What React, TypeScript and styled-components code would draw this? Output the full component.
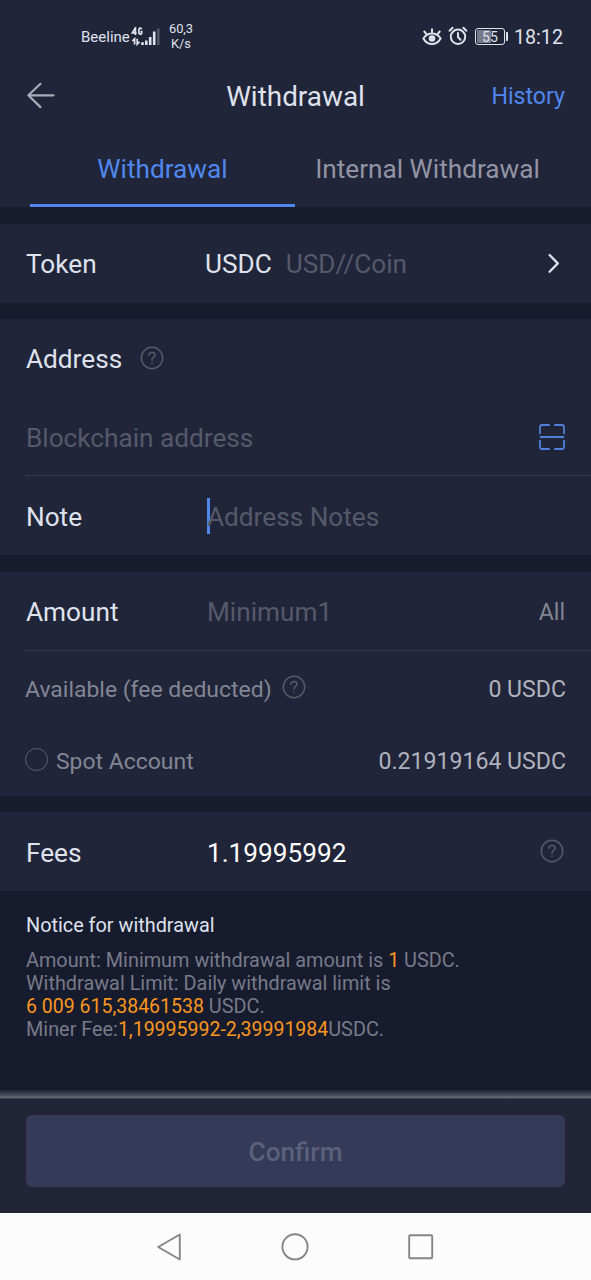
import React from "react";
import styled, { createGlobalStyle } from "styled-components";

const GlobalStyle = createGlobalStyle`
  *, *::before, *::after { box-sizing: border-box; }
  body { margin: 0; background: #171b2e; }
`;

const Screen = styled.div`
  display: flex;
  flex-direction: column;
  width: 591px;
  height: 1280px;
  overflow: hidden;
  background: #171b2e;
  color: #dfe2ec;
  font-family: Roboto, "Liberation Sans", sans-serif;
  font-size: 26.2px;
  line-height: 1.2;
  white-space: nowrap;

  svg { display: block; flex: none; }
`;

const TopPanel = styled.header`
  height: 207px;
  flex: none;
  background: #212539;
`;

const StatusBar = styled.div`
  display: flex;
  align-items: center;
  justify-content: space-between;
  height: 61px;
  padding: 13px 28px 0 81px;
`;

const StatusGroup = styled.div`
  display: flex;
  align-items: center;
`;

const Carrier = styled.span`
  width: 50px;
  font-size: 15px;
`;

const Speed = styled.span`
  width: 26px;
  margin: 0 0 2px 7px;
  font-size: 12.8px;
  line-height: 15px;
  text-align: center;
`;

const Battery = styled.div`
  display: flex;
  align-items: center;
  margin: 0 0 1px 7px;

  &::after {
    content: "";
    width: 2px;
    height: 9px;
    margin-left: 1px;
    border-radius: 0 1px 1px 0;
    background: #dfe2ec;
  }
`;

const BatteryLevel = styled.span<{ $level: number }>`
  width: 30px;
  height: 17px;
  border: 1px solid #dfe2ec;
  border-radius: 3px;
  background: linear-gradient(90deg, #777a88 ${(p) => p.$level}%, transparent ${(p) => p.$level}%) content-box;
  padding: 1px;
  font-size: 14px;
  line-height: 14px;
  text-align: center;
`;

const Clock = styled.time`
  margin-left: 6px;
  padding-top: 1px;
  font-size: 19.7px;
`;

const TitleBar = styled.div`
  display: grid;
  grid-template-columns: 1fr auto 1fr;
  align-items: center;
  height: 70px;
  padding: 0 26px 0 26px;
`;

const Title = styled.h1`
  margin: 0;
  padding-top: 2px;
  font-size: 27.9px;
  font-weight: 400;
`;

const HistoryLink = styled.a`
  justify-self: end;
  padding-top: 2px;
  color: #5087ee;
  font-size: 23.1px;
`;

const Tabs = styled.nav`
  display: grid;
  grid-template-columns: 265px 265px;
  height: 76px;
  padding: 0 30px;
`;

const Tab = styled.a<{ $active?: boolean }>`
  display: flex;
  align-items: center;
  justify-content: center;
  padding-top: 5px;
  color: ${(p) => (p.$active ? "#5087ee" : "#9294a3")};
  border-bottom: 3px solid ${(p) => (p.$active ? "#5087ee" : "transparent")};
`;

const Panel = styled.section<{ $gap?: number }>`
  flex: none;
  margin-top: ${(p) => p.$gap ?? 17}px;
  background: #212539;
`;

const Row = styled.div<{ $height?: number; $inset?: number; $right?: number; $drop?: number }>`
  display: flex;
  align-items: center;
  height: ${(p) => p.$height ?? 79}px;
  padding: 0 ${(p) => p.$right ?? 26}px 0 ${(p) => p.$inset ?? 26}px;

  & > span { padding-top: ${(p) => p.$drop ?? 2}px; }
`;

const Divider = styled.hr`
  height: 1px;
  margin: 0 0 0 25px;
  border: 0;
  background: #34384c;
`;

const Label = styled.span`
  width: 181px;
  flex: none;
`;

const InlineLabel = styled.span`
  margin-right: 18px;
`;

const Placeholder = styled.span`
  color: #555969;
`;

const TokenCode = styled.span`
  margin: 0 14px 0 -2px;
`;

const Caret = styled.i`
  width: 3px;
  height: 36px;
  margin-right: -3px;
  background: #5087ee;
`;

const Trailing = styled.span<{ $tone?: string }>`
  margin-left: auto;
  color: ${(p) => p.$tone ?? "#b0b2be"};
  font-size: 23.1px;
`;

const Muted = styled.span<{ $gap?: number }>`
  margin-right: ${(p) => p.$gap ?? 0}px;
  color: #838694;
  font-size: 22.95px;
`;

const Radio = styled.i`
  width: 23px;
  height: 23px;
  margin: 0 8px 2px 0;
  border: 1.5px solid #5d6070;
  border-radius: 50%;
`;

const FeeValue = styled.span`
  color: #ffffff;
`;

const Notice = styled.section`
  flex: 1;
  padding: 23px 26px 0;
  color: #777a88;
  font-size: 19.85px;
  line-height: 23px;
`;

const NoticeTitle = styled.h2`
  margin: 0 0 12px;
  color: #dfe2ec;
  font-size: 19.85px;
  font-weight: 400;
  line-height: 23px;
`;

const NoticeLine = styled.p`
  margin: 0;
`;

const Highlight = styled.b`
  color: #f9971e;
  font-size: 19.5px;
  font-weight: 400;
`;

const FooterShadow = styled.div`
  flex: none;
  height: 9px;
  background: linear-gradient(#1f2235, #4e505c 65%, #6d6f79 80%, #5a5c68 88%, #2a2d40);
`;

const Footer = styled.footer`
  flex: none;
  height: 114px;
  padding: 16px 26px 0;
  background: #212537;
`;

const ConfirmButton = styled.button`
  display: block;
  width: 539px;
  height: 72px;
  padding: 2px 0 0;
  border: 0;
  border-radius: 6px;
  background: #343a58;
  color: #5b607d;
  font: 500 26.2px Roboto, "Liberation Sans", sans-serif;
`;

const SystemNav = styled.nav`
  display: flex;
  flex: none;
  align-items: center;
  justify-content: space-between;
  height: 67px;
  padding: 0 157px 0 156px;
  background: #fcfcfc;
`;

const HelpSvg = styled.svg<{ $end?: boolean }>`
  margin: 0 1px 2px ${(p) => (p.$end ? "auto" : "0")};
`;

const EndIcon = styled.svg`
  margin-left: auto;
`;

const HelpIcon = ({ end }: { end?: boolean }) => (
  <HelpSvg $end={end} width="24" height="24" viewBox="0 0 24 24" fill="none" stroke="#555969" strokeWidth="1.5" strokeLinecap="round">
    <circle cx="12" cy="12" r="10.7" />
    <path d="M8.9 9.3c0-1.7 1.3-2.8 3.1-2.8s3.1 1.1 3.1 2.7c0 1.9-3.1 2.2-3.1 4.6v.5M12 17v.6" />
  </HelpSvg>
);

const SignalIcon = () => (
  <svg width="30" height="20" viewBox="0 0 30 20" fill="none" stroke="#dfe2ec">
    <path strokeWidth="1.7" d="M4.4 8V.8L1.4 5.8h4.2M10.7 2.2C10 .5 7.9.7 7.9 3v2.3c0 2.6 2.8 2.3 2.8.4V4.6H9.5" />
    <path strokeWidth="1.7" d="M3.6 17.5v-5.6L1.4 14.2M6.2 11.8v5.4l2.3-2.4" />
    <path strokeWidth="2.6" d="M11.5 15.3V18M15.3 13.5V18M19.2 10V18M23.2 4.5V18" />
    <path strokeWidth="2.4" stroke="#555969" d="M27.3 1.5V18" />
  </svg>
);

const EyeIcon = () => (
  <svg width="20" height="18" viewBox="0 0 20 18" fill="none" stroke="#dfe2ec" strokeWidth="2" strokeLinecap="round">
    <path d="M1.4 10.5C3.4 7 6.3 5.4 10 5.4s6.6 1.6 8.6 5.1c-2 3.6-4.9 5.5-8.6 5.5s-6.6-1.9-8.6-5.5ZM10 4.8V1.2M4.6 6.3 2.3 3.5M15.4 6.3l2.3-2.8" />
    <circle cx="10" cy="10.5" r="3.3" fill="#dfe2ec" stroke="none" />
  </svg>
);

const AlarmSvg = styled.svg`
  margin: 0 0 1px 6px;
`;

const AlarmIcon = () => (
  <AlarmSvg width="20" height="20" viewBox="0 0 20 20" fill="none" stroke="#dfe2ec" strokeWidth="2" strokeLinecap="round">
    <circle cx="10" cy="10.8" r="7.2" />
    <path d="M10 7v4l2.5 2.8M1.6 4.7l3-2.9M18.4 4.7l-3-2.9" />
  </AlarmSvg>
);

const BackIcon = () => (
  <svg width="30" height="28" viewBox="0 0 30 28" fill="none" stroke="#a9abba" strokeWidth="2.2" strokeLinecap="round" strokeLinejoin="round">
    <path d="M14.5 1.8 2.3 13.3l12.2 11.8M2.3 13.3h25.2" />
  </svg>
);

const ChevronIcon = () => (
  <EndIcon width="14" height="24" viewBox="0 0 14 24" fill="none" stroke="#dfe2ec" strokeWidth="2.3" strokeLinecap="round" strokeLinejoin="round">
    <path d="m2.6 3 8.2 8.4-8.2 8.4" />
  </EndIcon>
);

const ScanIcon = () => (
  <EndIcon width="26" height="26" viewBox="0 0 26 26" fill="none" stroke="#5080d8" strokeWidth="1.8">
    <path d="M1 10V3q0-2 2-2h7.7M15.3 1H23q2 0 2 2v7M25 16v7q0 2-2 2h-7.7M10.7 25H3q-2 0-2-2v-7M1 13h24" />
  </EndIcon>
);

export default function App() {
  return (
    <>
      <GlobalStyle />
      <Screen>
        <TopPanel>
          <StatusBar>
            <StatusGroup>
              <Carrier>Beeline</Carrier>
              <SignalIcon />
              <Speed>60,3<br />K/s</Speed>
            </StatusGroup>
            <StatusGroup>
              <EyeIcon />
              <AlarmIcon />
              <Battery><BatteryLevel $level={55}>55</BatteryLevel></Battery>
              <Clock>18:12</Clock>
            </StatusGroup>
          </StatusBar>
          <TitleBar>
            <BackIcon />
            <Title>Withdrawal</Title>
            <HistoryLink>History</HistoryLink>
          </TitleBar>
          <Tabs>
            <Tab $active>Withdrawal</Tab>
            <Tab>Internal Withdrawal</Tab>
          </Tabs>
        </TopPanel>

        <Panel>
          <Row $right={30}>
            <Label>Token</Label>
            <TokenCode>USDC</TokenCode>
            <Placeholder>USD//Coin</Placeholder>
            <ChevronIcon />
          </Row>
        </Panel>

        <Panel $gap={16}>
          <Row>
            <InlineLabel>Address</InlineLabel>
            <HelpIcon />
          </Row>
          <Row $height={77} $drop={4}>
            <Placeholder>Blockchain address</Placeholder>
            <ScanIcon />
          </Row>
          <Divider />
          <Row $drop={4}>
            <Label>Note</Label>
            <Caret />
            <Placeholder>Address Notes</Placeholder>
          </Row>
        </Panel>

        <Panel>
          <Row $height={78} $drop={4}>
            <Label>Amount</Label>
            <Placeholder>Minimum1</Placeholder>
            <Trailing $tone="#838694">All</Trailing>
          </Row>
          <Divider />
          <Row $height={74} $inset={25} $right={25} $drop={3}>
            <Muted $gap={10}>Available (fee deducted)</Muted>
            <HelpIcon />
            <Trailing>0 USDC</Trailing>
          </Row>
          <Row $height={71} $inset={25} $right={25}>
            <Radio />
            <Muted>Spot Account</Muted>
            <Trailing>0.21919164 USDC</Trailing>
          </Row>
        </Panel>

        <Panel $gap={16}>
          <Row $drop={4}>
            <Label>Fees</Label>
            <FeeValue>1.19995992</FeeValue>
            <HelpIcon end />
          </Row>
        </Panel>

        <Notice>
          <NoticeTitle>Notice for withdrawal</NoticeTitle>
          <NoticeLine>Amount: Minimum withdrawal amount is <Highlight>1</Highlight> USDC.</NoticeLine>
          <NoticeLine>Withdrawal Limit: Daily withdrawal limit is</NoticeLine>
          <NoticeLine><Highlight>6 009 615,38461538</Highlight> USDC.</NoticeLine>
          <NoticeLine>Miner Fee:<Highlight>1,19995992-2,39991984</Highlight>USDC.</NoticeLine>
        </Notice>

        <FooterShadow />
        <Footer>
          <ConfirmButton>Confirm</ConfirmButton>
        </Footer>

        <SystemNav>
          <svg width="26" height="28" viewBox="0 0 26 28" fill="none" stroke="#858585" strokeWidth="1.9" strokeLinejoin="round">
            <path d="M23.8 1.5v25L2.2 14Z" />
          </svg>
          <svg width="28" height="28" viewBox="0 0 28 28" fill="none" stroke="#858585" strokeWidth="1.9">
            <circle cx="14" cy="13.8" r="12.6" />
          </svg>
          <svg width="26" height="26" viewBox="0 0 26 26" fill="none" stroke="#858585" strokeWidth="1.9">
            <rect x="1.2" y="1.3" width="23" height="23" rx="1" />
          </svg>
        </SystemNav>
      </Screen>
    </>
  );
}
